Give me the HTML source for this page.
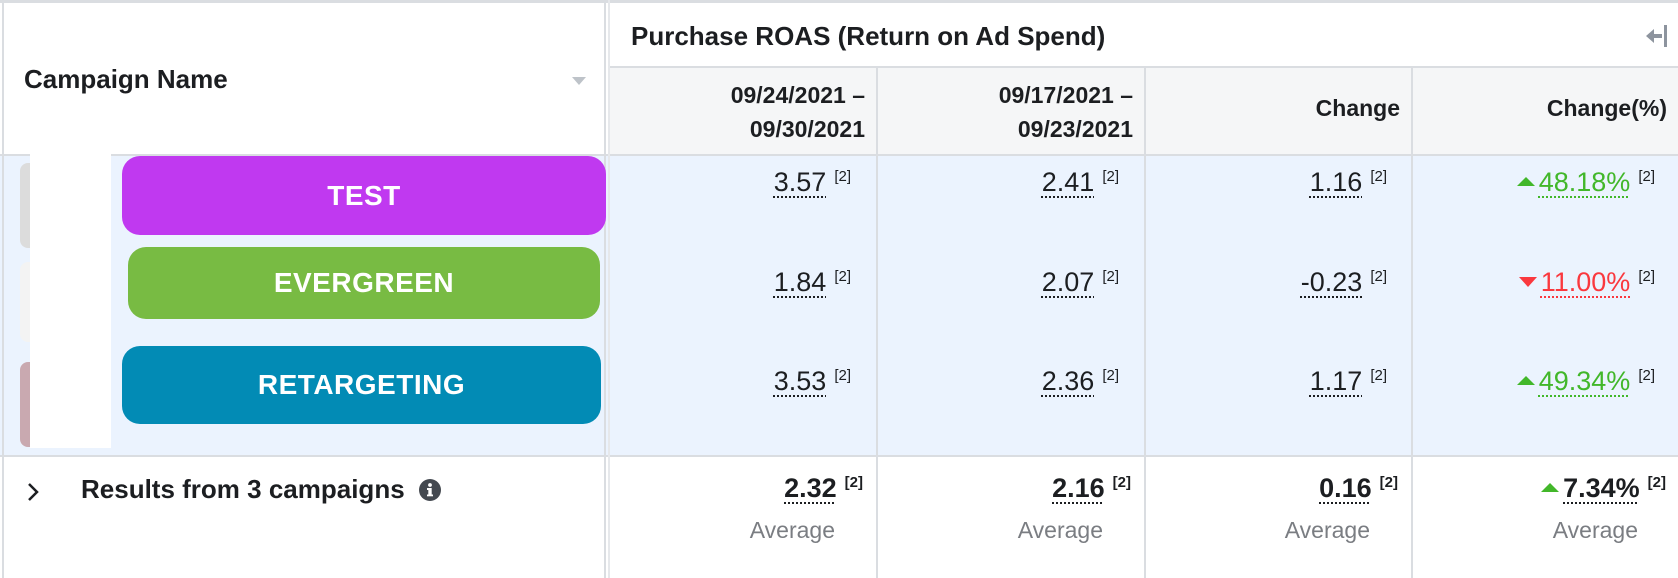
<!DOCTYPE html>
<html><head><meta charset="utf-8"><style>
*{margin:0;padding:0;box-sizing:border-box}
body{width:1678px;height:578px;overflow:hidden;background:#fff;font-family:"Liberation Sans",Arial,sans-serif;color:#1c1e21;position:relative}
.a{position:absolute}
.hl{position:absolute;height:2px;background:#dadde1}
.vl{position:absolute;width:2px;background:#dadde1}
.b{font-weight:bold}
.val{position:absolute;font-size:27px;text-align:right;white-space:nowrap}
.val u{text-decoration:underline dotted 2px;text-underline-offset:5px}
.val sup{font-size:15px;margin-left:8px;vertical-align:10px}
.pill{position:absolute;color:#fff;font-weight:bold;font-size:28px;text-align:center;border-radius:18px;letter-spacing:0.5px}
.avg{position:absolute;font-size:23px;color:#7a7d82;text-align:right}
</style></head><body>
<div class="a" style="left:0;top:0;width:1678px;height:3px;background:#dadde1"></div>
<div class="a" style="left:610px;top:67px;width:1068px;height:88px;background:#f5f6f7"></div>
<div class="a" style="left:0;top:155px;width:1678px;height:301px;background:#ebf3fe"></div>
<div class="vl" style="left:2px;top:0;height:578px;width:2px"></div>
<div class="hl" style="left:610px;top:66px;width:1068px"></div>
<div class="hl" style="left:0;top:154px;width:1678px"></div>
<div class="hl" style="left:0;top:455px;width:1678px"></div>
<div class="vl" style="left:604px;top:0;height:578px"></div>
<div class="vl" style="left:608px;top:0;height:578px;background:#e6e8eb"></div>
<div class="vl" style="left:876px;top:66px;height:512px"></div>
<div class="vl" style="left:1144px;top:66px;height:512px"></div>
<div class="vl" style="left:1411px;top:66px;height:512px"></div>

<div class="a b" style="left:24px;top:64px;font-size:26px">Campaign Name</div>
<div class="a" style="left:572px;top:77px;width:0;height:0;border-left:7px solid transparent;border-right:7px solid transparent;border-top:8px solid #bec3c9"></div>
<div class="a b" style="left:631px;top:21px;font-size:26px">Purchase ROAS (Return on Ad Spend)</div>
<svg class="a" style="left:1644px;top:24px" width="26" height="24" viewBox="0 0 26 24"><rect x="20" y="1" width="3" height="22" fill="#8d949e"/><path d="M2 12 L10 5 L10 10 L18 10 L18 14 L10 14 L10 19 Z" fill="#8d949e"/></svg>

<div class="a b" style="right:813px;top:78px;font-size:23px;line-height:34px;text-align:right">09/24/2021 –<br>09/30/2021</div>
<div class="a b" style="right:545px;top:78px;font-size:23px;line-height:34px;text-align:right">09/17/2021 –<br>09/23/2021</div>
<div class="a b" style="right:278px;top:95px;font-size:23px">Change</div>
<div class="a b" style="right:11px;top:95px;font-size:23px">Change(%)</div>

<div class="a" style="left:20px;top:163px;width:14px;height:85px;background:#dcdcdc;border-radius:8px 0 0 8px"></div>
<div class="a" style="left:20px;top:262px;width:14px;height:80px;background:#f3f3f3;border-radius:8px 0 0 8px"></div>
<div class="a" style="left:20px;top:362px;width:14px;height:85px;background:#c9a9b0;border-radius:8px 0 0 8px"></div>
<div class="a" style="left:30px;top:150px;width:81px;height:298px;background:#fff"></div>

<div class="pill" style="left:122px;top:156px;width:484px;height:79px;line-height:79px;background:#c039f0">TEST</div>
<div class="pill" style="left:128px;top:247px;width:472px;height:72px;line-height:72px;background:#78bb43">EVERGREEN</div>
<div class="pill" style="left:122px;top:346px;width:479px;height:78px;line-height:78px;background:#028bb5">RETARGETING</div>

<div class="val" style="right:827px;top:167px"><u>3.57</u><sup>[2]</sup></div>
<div class="val" style="right:559px;top:167px"><u>2.41</u><sup>[2]</sup></div>
<div class="val" style="right:291px;top:167px"><u>1.16</u><sup>[2]</sup></div>
<div class="val" style="right:23px;top:167px;color:#42b72a"><span style="display:inline-block;width:0;height:0;border-left:9px solid transparent;border-right:9px solid transparent;border-bottom:9px solid #42b72a;margin-right:4px;vertical-align:5px"></span><u>48.18%</u><sup style="color:#1c1e21">[2]</sup></div>

<div class="val" style="right:827px;top:267px"><u>1.84</u><sup>[2]</sup></div>
<div class="val" style="right:559px;top:267px"><u>2.07</u><sup>[2]</sup></div>
<div class="val" style="right:291px;top:267px"><u>-0.23</u><sup>[2]</sup></div>
<div class="val" style="right:23px;top:267px;color:#fa383e"><span style="display:inline-block;width:0;height:0;border-left:9px solid transparent;border-right:9px solid transparent;border-top:10px solid #fa383e;margin-right:4px;vertical-align:4px"></span><u>11.00%</u><sup style="color:#1c1e21">[2]</sup></div>

<div class="val" style="right:827px;top:366px"><u>3.53</u><sup>[2]</sup></div>
<div class="val" style="right:559px;top:366px"><u>2.36</u><sup>[2]</sup></div>
<div class="val" style="right:291px;top:366px"><u>1.17</u><sup>[2]</sup></div>
<div class="val" style="right:23px;top:366px;color:#42b72a"><span style="display:inline-block;width:0;height:0;border-left:9px solid transparent;border-right:9px solid transparent;border-bottom:9px solid #42b72a;margin-right:4px;vertical-align:5px"></span><u>49.34%</u><sup style="color:#1c1e21">[2]</sup></div>

<svg class="a" style="left:26px;top:481px" width="14" height="22" viewBox="0 0 14 22"><path d="M3 3 L11 11 L3 19" stroke="#1c1e21" stroke-width="2.5" fill="none"/></svg>
<div class="a b" style="left:81px;top:474px;font-size:26px">Results from 3 campaigns</div>
<svg class="a" style="left:419px;top:479px" width="22" height="22" viewBox="0 0 22 22"><circle cx="11" cy="11" r="11" fill="#444950"/><rect x="9.3" y="9" width="3.4" height="8" fill="#fff"/><circle cx="11" cy="6" r="1.9" fill="#fff"/><rect x="8" y="9" width="3" height="2" fill="#fff"/><rect x="8" y="15.5" width="6" height="1.8" fill="#fff"/></svg>

<div class="val b" style="right:815px;top:473px"><u>2.32</u><sup>[2]</sup></div>
<div class="val b" style="right:547px;top:473px"><u>2.16</u><sup>[2]</sup></div>
<div class="val b" style="right:280px;top:473px"><u>0.16</u><sup>[2]</sup></div>
<div class="val b" style="right:12px;top:473px"><span style="display:inline-block;width:0;height:0;border-left:9px solid transparent;border-right:9px solid transparent;border-bottom:9px solid #42b72a;margin-right:4px;vertical-align:5px"></span><u>7.34%</u><sup>[2]</sup></div>

<div class="avg" style="right:843px;top:517px">Average</div>
<div class="avg" style="right:575px;top:517px">Average</div>
<div class="avg" style="right:308px;top:517px">Average</div>
<div class="avg" style="right:40px;top:517px">Average</div>
</body></html>
